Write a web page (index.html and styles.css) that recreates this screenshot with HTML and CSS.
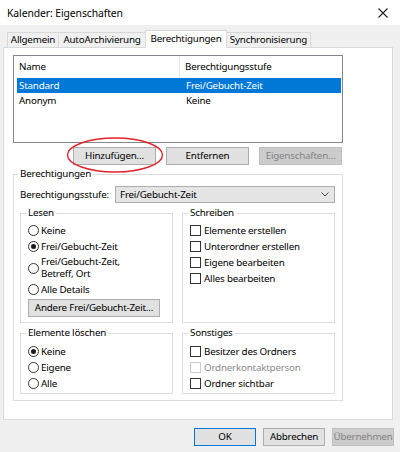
FILE: index.html
```html
<!DOCTYPE html>
<html lang="de">
<head>
<meta charset="utf-8">
<title>Kalender: Eigenschaften</title>
<link rel="stylesheet" href="styles.css">
</head>
<body>
<div class="dialog">
  <div class="titlebar">
    <span class="title">Kalender: Eigenschaften</span>
    <svg class="close" width="10" height="10" viewBox="0 0 10 10"><path d="M0.5 0.5L9.5 9.5M9.5 0.5L0.5 9.5" stroke="#222" stroke-width="1.1" fill="none"/></svg>
  </div>
  <div class="tabs">
    <div class="tab t1">Allgemein</div>
    <div class="tab t2">AutoArchivierung</div>
    <div class="tab t3 active">Berechtigungen</div>
    <div class="tab t4">Synchronisierung</div>
  </div>
  <div class="panel">
    <div class="list">
      <div class="list-head">
        <div class="hcell c1">Name</div>
        <div class="hcell c2">Berechtigungsstufe</div>
      </div>
      <div class="row selected"><span class="rc1">Standard</span><span class="rc2">Frei/Gebucht-Zeit</span></div>
      <div class="row"><span class="rc1">Anonym</span><span class="rc2">Keine</span></div>
    </div>
    <div class="btnrow">
      <button class="btn">Hinzufügen...</button>
      <button class="btn">Entfernen</button>
      <button class="btn disabled">Eigenschaften...</button>
    </div>
    <fieldset class="group outer">
      <legend>Berechtigungen</legend>
      <div class="levelrow">
        <span class="levellabel">Berechtigungsstufe:</span>
        <div class="combo"><span>Frei/Gebucht-Zeit</span>
          <svg width="8" height="5" viewBox="0 0 8 5"><path d="M0.5 0.5L4 4L7.5 0.5" stroke="#444" stroke-width="1" fill="none"/></svg>
        </div>
      </div>
      <div class="grid">
        <fieldset class="group inner">
          <legend>Lesen</legend>
          <div class="opt"><span class="radio"></span>Keine</div>
          <div class="opt"><span class="radio on"></span>Frei/Gebucht-Zeit</div>
          <div class="opt multi"><span class="radio"></span><span>Frei/Gebucht-Zeit,<br>Betreff, Ort</span></div>
          <div class="opt"><span class="radio"></span>Alle Details</div>
          <button class="btn wide">Andere Frei/Gebucht-Zeit...</button>
        </fieldset>
        <fieldset class="group inner">
          <legend>Schreiben</legend>
          <div class="opt"><span class="check"></span>Elemente erstellen</div>
          <div class="opt"><span class="check"></span>Unterordner erstellen</div>
          <div class="opt"><span class="check"></span>Eigene bearbeiten</div>
          <div class="opt"><span class="check"></span>Alles bearbeiten</div>
        </fieldset>
        <fieldset class="group inner low">
          <legend>Elemente löschen</legend>
          <div class="opt"><span class="radio on"></span>Keine</div>
          <div class="opt"><span class="radio"></span>Eigene</div>
          <div class="opt"><span class="radio"></span>Alle</div>
        </fieldset>
        <fieldset class="group inner low">
          <legend>Sonstiges</legend>
          <div class="opt"><span class="check"></span>Besitzer des Ordners</div>
          <div class="opt dis"><span class="check"></span>Ordnerkontaktperson</div>
          <div class="opt"><span class="check"></span>Ordner sichtbar</div>
        </fieldset>
      </div>
    </fieldset>
  </div>
  <div class="footer">
    <button class="btn foot default">OK</button>
    <button class="btn foot">Abbrechen</button>
    <button class="btn foot disabled">Übernehmen</button>
  </div>
  <svg class="mark" width="100" height="40" viewBox="0 0 100 40"><ellipse cx="50" cy="19" rx="47.5" ry="17" stroke="#e2232a" stroke-width="1.4" fill="none"/></svg>
</div>
</body>
</html>
```
FILE: styles.css
```css
* { box-sizing: border-box; }
html, body { margin: 0; padding: 0; }
body {
  width: 400px;
  height: 452px;
  background: #f0f0f0;
  font-family: "Noto Sans", "Open Sans", sans-serif;
  font-size: 9.8px;
  letter-spacing: -0.2px;
  color: #000;
  overflow: hidden;
}
.dialog { position: relative; width: 400px; height: 452px; }
.titlebar {
  height: 25px;
  background: #fff;
  display: flex;
  align-items: center;
  justify-content: space-between;
  padding: 0 12px 0 7px;
}
.title { font-size: 10.4px; letter-spacing: -0.1px; }
.tabs {
  display: flex;
  align-items: flex-end;
  height: 22px;
  padding-left: 7px;
}
.tab {
  height: 15px;
  line-height: 14px;
  border: 1px solid #d9d9d9;
  border-bottom: none;
  background: #f0f0f0;
  text-align: center;
  margin-right: -1px;
  white-space: nowrap;
}
.t1 { width: 52px; }
.t2 { width: 88px; }
.t3 { width: 82px; }
.t4 { width: 85px; }
.tab.active {
  height: 18px;
  line-height: 15px;
  background: #fff;
  margin-bottom: -1px;
  position: relative;
  z-index: 1;
}
.panel {
  height: 373px;
  margin: 0 7px 0 3px;
  border: 1px solid #d9d9d9;
  background: #fff;
  padding: 7px 9px 0 9px;
}
.list {
  width: 330px;
  height: 88px;
  border: 1px solid #828790;
  background: #fff;
}
.list-head {
  display: grid;
  grid-template-columns: 166px 1fr;
  height: 22px;
}
.hcell {
  line-height: 22px;
  padding-left: 5px;
}
.hcell.c1 { border-right: 1px solid #e5e5e5; }
.row {
  display: grid;
  grid-template-columns: 163px 1fr;
  height: 15px;
  line-height: 15px;
  margin: 0 1px 0 3px;
}
.rc1 { padding-left: 2px; }
.rc2 { padding-left: 6px; }
.row.selected { background: #0078d7; color: #fff; }
.btnrow {
  width: 329px;
  display: flex;
  justify-content: flex-end;
  gap: 10px;
  margin-top: 4px;
}
.btn {
  font-family: inherit;
  font-size: 9.8px;
  letter-spacing: -0.2px;
  color: #000;
  height: 18px;
  width: 83px;
  padding: 0;
  background: #e1e1e1;
  border: 1px solid #adadad;
  border-radius: 0;
  line-height: 16px;
}
.btn.disabled { background: #cccccc; border-color: #bfbfbf; color: #838383; }
.group {
  margin: 0;
  min-width: 0;
  border: 1px solid #dcdcdc;
}
.group legend {
  padding: 0 2px;
  margin-left: -2px;
  line-height: 14px;
}
.outer {
  width: 330px;
  margin-top: 2px;
  padding: 5px 7px 5px 6px;
  height: 234px;
}
.levelrow {
  display: flex;
  align-items: center;
  height: 17px;
}
.levellabel { width: 95px; }
.combo {
  flex: 1;
  height: 17px;
  background: #e5e5e5;
  border: 1px solid #adadad;
  display: flex;
  align-items: center;
  justify-content: space-between;
  padding: 0 5px 0 4px;
}
.grid {
  display: grid;
  grid-template-columns: 153px 153px;
  column-gap: 9px;
  row-gap: 3px;
  margin-top: 3px;
}
.inner {
  padding: 2px 6px 5px 7px;
  height: 117px;
}
.inner.low { height: 68px; padding-top: 3px; }
.opt {
  display: flex;
  align-items: center;
  height: 16px;
  white-space: nowrap;
}
.opt.multi { height: 27px; line-height: 12px; padding: 2px 0 1px; }
.opt.dis { color: #8a8a8a; }
.radio {
  width: 11px;
  height: 11px;
  border: 1px solid #333;
  border-radius: 50%;
  margin-right: 2px;
  display: flex;
  align-items: center;
  justify-content: center;
  flex: none;
}
.radio.on::after {
  content: "";
  width: 5px;
  height: 5px;
  border-radius: 50%;
  background: #1a1a1a;
}
.check {
  width: 11px;
  height: 11px;
  border: 1px solid #333;
  margin-right: 3px;
  flex: none;
}
.opt.dis .check { border-color: #cccccc; }
.btn.wide { width: 132px; margin-top: 2px; }
.footer {
  display: flex;
  justify-content: flex-end;
  gap: 7px;
  margin-top: 8px;
  padding-right: 6px;
}
.btn.foot { width: 62px; }
.btn.default { border-color: #0078d7; }
.mark {
  position: absolute;
  left: 65px;
  top: 136px;
}
```
